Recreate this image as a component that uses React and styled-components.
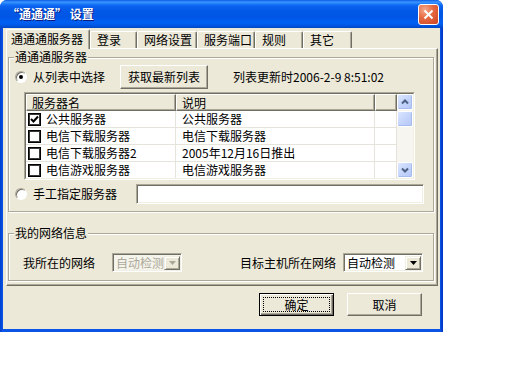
import React from 'react';
import styled, { createGlobalStyle, css } from 'styled-components';

const FONT = `"Noto Sans CJK SC", "Liberation Sans", sans-serif`;

const GlobalStyle = createGlobalStyle`
  html, body { margin: 0; padding: 0; background: #fff; }
  body { font-family: ${FONT}; font-size: 12px; color: #000; }
  * { box-sizing: border-box; }
`;

const Window = styled.div`
  width: 443px;
  height: 332px;
  display: flex;
  flex-direction: column;
  background: linear-gradient(to right, #0040D0 0, #0A55E6 3px, #0A55E6 calc(100% - 3px), #0030C0 100%);
  border-radius: 7px 7px 0 0;
  overflow: hidden;
`;

const TitleBar = styled.div`
  height: 28px;
  flex: none;
  display: flex;
  align-items: center;
  justify-content: space-between;
  padding: 0 4px 0 7px;
  background: linear-gradient(to bottom, #0A5FE6 0%, #3C95FF 8%, #1A7BFA 14%, #0A62EE 22%, #0058E6 40%, #0055E5 60%, #0060F2 80%, #0058E6 90%, #0047C4 100%);
`;

const Title = styled.span`
  color: #fff;
  font-weight: 700;
  font-size: 12px;
  line-height: 14px;
  text-shadow: 1px 1px 0 #0A1C7E;
`;

const CloseButton = styled.div`
  width: 21px;
  height: 21px;
  border: 1px solid #fff;
  border-radius: 3px;
  background: radial-gradient(circle at 30% 25%, #F4A98C 0%, #E5673F 45%, #CC4520 100%);
  display: flex;
  align-items: center;
  justify-content: center;
`;

const Body = styled.div`
  flex: 1;
  margin: 0 3px 3px;
  background: #ECE9D8;
  padding-top: 1px;
  display: flex;
  flex-direction: column;
`;

const TabStrip = styled.div`
  display: flex;
  align-items: flex-end;
  height: 19px;
  padding-left: 3px;
`;

const Tab = styled.div`
  flex: none;
  width: ${(p) => p.$w}px;
  height: ${(p) => (p.$active ? 20 : 17)}px;
  margin-bottom: ${(p) => (p.$active ? -1 : 0)}px;
  position: relative;
  z-index: ${(p) => (p.$active ? 2 : 1)};
  padding-left: ${(p) => (p.$active ? 4 : 6)}px;
  padding-bottom: ${(p) => (p.$active ? 1 : 0)}px;
  display: flex;
  align-items: center;
  line-height: 12px;
  background: #ECE9D8;
  border-top: 1px solid #fff;
  border-left: 1px solid #fff;
  border-right: 1px solid #716F64;
  box-shadow: inset -1px 0 0 #ACA899;
  border-radius: 2px 2px 0 0;
`;

const Panel = styled.div`
  margin-left: 3px;
  width: 432px;
  height: 238px;
  border: 1px solid;
  border-color: #fff #716F64 #716F64 #fff;
  box-shadow: inset -1px -1px 0 #ACA899;
  padding: 2px 3px 0 1px;
  display: flex;
  flex-direction: column;
`;

const Group = styled.fieldset`
  margin: ${(p) => p.$mt || 0}px 0 0 0;
  padding: 0;
  min-width: 0;
  border: 1px solid #ACA899;
  box-shadow: inset 1px 1px 0 #fff, 1px 1px 0 #fff;
`;

const Legend = styled.legend`
  margin-left: 5px;
  padding: 0 1px;
  font-size: 12px;
  line-height: 12px;
  background: #ECE9D8;
`;

const GroupInner = styled.div`
  display: flex;
  flex-direction: column;
  padding: 0 9px ${(p) => p.$pb}px 6px;
`;

const OptionRow = styled.div`
  display: flex;
  align-items: center;
  height: ${(p) => p.$h}px;
  margin-top: ${(p) => p.$mt}px;
`;

const RadioWrap = styled.div`
  display: flex;
  align-items: center;
  gap: 6px;
  line-height: 12px;
`;

const RadioCircle = styled.span`
  width: 12px;
  height: 12px;
  border-radius: 50%;
  background: #fff;
  border: 1px solid;
  border-color: #ACA899 #fff #fff #ACA899;
  box-shadow: inset 1px 1px 0 #716F64;
  display: flex;
  align-items: center;
  justify-content: center;
`;

const RadioDot = styled.span`
  width: 4px;
  height: 4px;
  border-radius: 50%;
  background: #000;
`;

const PushButton = styled.button`
  font: inherit;
  color: #000;
  padding: 0;
  margin: 0 0 0 ${(p) => p.$ml || 0}px;
  width: ${(p) => p.$w}px;
  height: ${(p) => p.$h || 23}px;
  background: #ECE9D8;
  display: flex;
  align-items: stretch;
  justify-content: stretch;
  line-height: 12px;
  ${(p) =>
    p.$default
      ? css`
          border: 1px solid #000;
          box-shadow: inset 1px 1px 0 #fff, inset -1px -1px 0 #716F64, inset -2px -2px 0 #ACA899;
        `
      : css`
          border: 1px solid;
          border-color: #fff #716F64 #716F64 #fff;
          box-shadow: inset -1px -1px 0 #ACA899;
        `}
`;

const ButtonFace = styled.span`
  flex: 1;
  display: flex;
  align-items: center;
  justify-content: center;
  margin: ${(p) => (p.$focus ? '3px' : '0')};
  border: ${(p) => (p.$focus ? '1px dotted #000' : 'none')};
`;

const InfoText = styled.span`
  margin-left: 25px;
  line-height: 12px;
`;

const ListOuter = styled.div`
  margin: 3px 0 0 9px;
  width: 391px;
  height: 88px;
  border: 1px solid;
  border-color: #ACA899 #fff #fff #ACA899;
  display: flex;
`;

const ListFrame = styled.div`
  flex: 1;
  border: 1px solid;
  border-color: #716F64 #F1EFE2 #F1EFE2 #716F64;
  background: #fff;
  display: flex;
  overflow: hidden;
`;

const ListBody = styled.div`
  flex: 1;
  display: flex;
  flex-direction: column;
`;

const HeaderRow = styled.div`
  display: flex;
  height: 17px;
  flex: none;
`;

const HeaderCell = styled.div`
  width: ${(p) => p.$w}px;
  flex: none;
  background: #ECE9D8;
  border: 1px solid;
  border-color: #fff #716F64 #716F64 #fff;
  box-shadow: inset -1px -1px 0 #ACA899;
  padding-left: 5px;
  display: flex;
  align-items: center;
  line-height: 12px;
`;

const Row = styled.div`
  display: flex;
  height: 17px;
  flex: none;
`;

const Cell = styled.div`
  width: ${(p) => p.$w}px;
  flex: none;
  border-right: 1px solid #E6E4DA;
  border-bottom: 1px solid #E6E4DA;
  padding-left: ${(p) => p.$pl}px;
  display: flex;
  align-items: center;
  gap: 5px;
  line-height: 12px;
  white-space: nowrap;
`;

const CheckBox = styled.span`
  width: 13px;
  height: 13px;
  flex: none;
  border: 1px solid #000;
  box-shadow: inset 1px 1px 0 #3A3A3A, inset -1px -1px 0 #3A3A3A;
  background: #fff;
  display: flex;
  align-items: center;
  justify-content: center;
`;

const ScrollBar = styled.div`
  width: 16px;
  flex: none;
  background: #F6F5F0;
  display: flex;
  flex-direction: column;
`;

const ScrollBtn = styled.div`
  width: 16px;
  height: ${(p) => p.$h || 16}px;
  margin-top: ${(p) => p.$mt || 0}px;
  flex: none;
  border: 1px solid #fff;
  border-radius: 2px;
  background: linear-gradient(135deg, #DCE6FE 0%, #C4D4FB 50%, #B4C7F6 100%);
  box-shadow: inset -1px -1px 0 #A6BCEE;
  display: flex;
  align-items: center;
  justify-content: center;
`;

const ScrollSpacer = styled.div`
  flex: 1;
`;

const TextField = styled.div`
  margin-left: 19px;
  width: 288px;
  height: 20px;
  border: 1px solid;
  border-color: #ACA899 #fff #fff #ACA899;
  box-shadow: inset 1px 1px 0 #716F64, inset -1px -1px 0 #F1EFE2;
  background: #fff;
`;

const NetRow = styled.div`
  display: flex;
  align-items: center;
  height: 19px;
  margin-top: 14px;
  padding-left: 8px;
  padding-right: 1px;
  line-height: 12px;
`;

const NetLabel = styled.span`
  margin-left: ${(p) => p.$ml || 0}px;
  margin-right: ${(p) => p.$mr}px;
  ${(p) => p.$push && 'margin-left: auto;'}
`;

const Combo = styled.div`
  width: ${(p) => p.$w}px;
  height: 19px;
  flex: none;
  border: 1px solid;
  border-color: #ACA899 #fff #fff #ACA899;
  box-shadow: inset 1px 1px 0 #716F64, inset -1px -1px 0 #F1EFE2;
  background: ${(p) => (p.$disabled ? '#F5F4EC' : '#fff')};
  padding: 2px 1px 1px 2px;
  display: flex;
`;

const ComboText = styled.span`
  flex: 1;
  padding-left: 1px;
  display: flex;
  align-items: center;
  color: ${(p) => (p.$disabled ? '#ACA899' : '#000')};
  line-height: 12px;
`;

const ComboButton = styled.span`
  width: 16px;
  flex: none;
  background: #ECE9D8;
  border: 1px solid;
  border-color: #F1EFE2 #716F64 #716F64 #F1EFE2;
  box-shadow: inset 1px 1px 0 #fff, inset -1px -1px 0 #ACA899;
  display: flex;
  align-items: center;
  justify-content: center;
`;

const ButtonRow = styled.div`
  display: flex;
  justify-content: flex-end;
  gap: 13px;
  margin-top: 7px;
  padding-right: 18px;
`;

const Radio = ({ checked, children }) => (
  <RadioWrap>
    <RadioCircle>{checked && <RadioDot />}</RadioCircle>
    <span>{children}</span>
  </RadioWrap>
);

const CheckMark = () => (
  <svg width="9" height="9" viewBox="0 0 9 9">
    <path d="M1 4 L3.5 6.5 L8 1.5" fill="none" stroke="#000" strokeWidth="2" />
  </svg>
);

const Chevron = ({ down }) => (
  <svg width="8" height="6" viewBox="0 0 8 6">
    <polyline
      points={down ? '1,1.5 4,4.5 7,1.5' : '1,4.5 4,1.5 7,4.5'}
      fill="none"
      stroke="#4D6185"
      strokeWidth="2"
    />
  </svg>
);

const DropArrow = ({ color }) => (
  <svg width="7" height="4" viewBox="0 0 7 4">
    <polygon points="0,0 7,0 3.5,4" fill={color} />
  </svg>
);

const tabs = [
  { label: '通通通服务器', w: 84, active: true },
  { label: '登录', w: 47 },
  { label: '网络设置', w: 60 },
  { label: '服务端口', w: 58 },
  { label: '规则', w: 48 },
  { label: '其它', w: 49 },
];

const servers = [
  { name: '公共服务器', desc: '公共服务器', checked: true },
  { name: '电信下载服务器', desc: '电信下载服务器' },
  { name: '电信下载服务器2', desc: '2005年12月16日推出' },
  { name: '电信游戏服务器', desc: '电信游戏服务器' },
];

const COLS = [150, 199, 22];

export default function App() {
  return (
    <>
      <GlobalStyle />
      <Window lang="zh-CN">
        <TitleBar>
          <Title>“通通通” 设置</Title>
          <CloseButton>
            <svg width="11" height="11" viewBox="0 0 11 11">
              <path d="M1.5 1.5 L9.5 9.5 M9.5 1.5 L1.5 9.5" stroke="#fff" strokeWidth="2" />
            </svg>
          </CloseButton>
        </TitleBar>
        <Body>
          <TabStrip>
            {tabs.map((t) => (
              <Tab key={t.label} $w={t.w} $active={t.active}>
                {t.label}
              </Tab>
            ))}
          </TabStrip>
          <Panel>
            <Group>
              <Legend>通通通服务器</Legend>
              <GroupInner $pb={7}>
                <OptionRow $h={24} $mt={2}>
                  <Radio checked>从列表中选择</Radio>
                  <PushButton $w={88} $h={24} $ml={15}>
                    <ButtonFace>获取最新列表</ButtonFace>
                  </PushButton>
                  <InfoText>列表更新时2006-2-9 8:51:02</InfoText>
                </OptionRow>
                <ListOuter>
                  <ListFrame>
                    <ListBody>
                      <HeaderRow>
                        <HeaderCell $w={COLS[0]}>服务器名</HeaderCell>
                        <HeaderCell $w={COLS[1]}>说明</HeaderCell>
                        <HeaderCell $w={COLS[2]} />
                      </HeaderRow>
                      {servers.map((s) => (
                        <Row key={s.name}>
                          <Cell $w={COLS[0]} $pl={2}>
                            <CheckBox>{s.checked && <CheckMark />}</CheckBox>
                            {s.name}
                          </Cell>
                          <Cell $w={COLS[1]} $pl={6}>
                            {s.desc}
                          </Cell>
                          <Cell $w={COLS[2]} $pl={0} />
                        </Row>
                      ))}
                    </ListBody>
                    <ScrollBar>
                      <ScrollBtn>
                        <Chevron />
                      </ScrollBtn>
                      <ScrollBtn $mt={1} />
                      <ScrollSpacer />
                      <ScrollBtn>
                        <Chevron down />
                      </ScrollBtn>
                    </ScrollBar>
                  </ListFrame>
                </ListOuter>
                <OptionRow $h={20} $mt={4}>
                  <Radio>手工指定服务器</Radio>
                  <TextField />
                </OptionRow>
              </GroupInner>
            </Group>
            <Group $mt={15}>
              <Legend>我的网络信息</Legend>
              <GroupInner $pb={8}>
                <NetRow>
                  <NetLabel $mr={17}>我所在的网络</NetLabel>
                  <Combo $w={70} $disabled>
                    <ComboText $disabled>自动检测</ComboText>
                    <ComboButton>
                      <DropArrow color="#ACA899" />
                    </ComboButton>
                  </Combo>
                  <NetLabel $push $mr={7}>目标主机所在网络</NetLabel>
                  <Combo $w={80}>
                    <ComboText>自动检测</ComboText>
                    <ComboButton>
                      <DropArrow color="#000" />
                    </ComboButton>
                  </Combo>
                </NetRow>
              </GroupInner>
            </Group>
          </Panel>
          <ButtonRow>
            <PushButton $w={75} $default>
              <ButtonFace $focus>确定</ButtonFace>
            </PushButton>
            <PushButton $w={75}>
              <ButtonFace>取消</ButtonFace>
            </PushButton>
          </ButtonRow>
        </Body>
      </Window>
    </>
  );
}
